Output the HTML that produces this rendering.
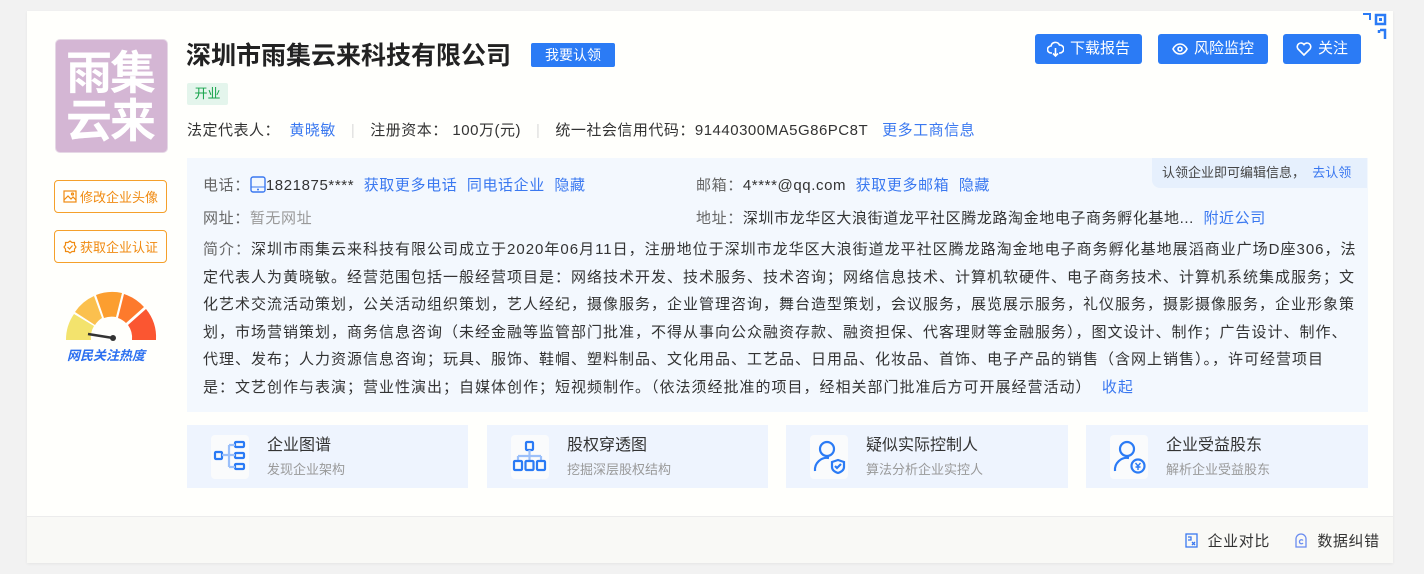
<!DOCTYPE html>
<html><head><meta charset="utf-8"><style>
*{margin:0;padding:0;box-sizing:border-box}
body{width:1424px;height:574px;background:#f2f2f2;font-family:"Liberation Sans","Noto Sans CJK SC",sans-serif;color:#333;position:relative;overflow:hidden}
.card{position:absolute;left:27px;top:11px;width:1366px;height:552px;background:#fffffc;box-shadow:0 1px 3px rgba(0,0,0,.06)}
.a{position:absolute;white-space:nowrap}
.blue{color:#3a78f0}
.btn{position:absolute;background:#2b7bf5;color:#fff;border-radius:3px;font-size:15px;height:30px;line-height:30px;display:flex;align-items:center;justify-content:center;gap:6px}
.obtn{position:absolute;left:54px;width:113px;height:33px;border:1px solid #f5a02a;border-radius:4px;color:#f08a10;font-size:13px;display:flex;align-items:center;justify-content:center;gap:3px}
.info{position:absolute;left:187px;top:158px;width:1181px;height:254px;background:#f3f8fe}
.t{font-size:15px;color:#333;letter-spacing:0.6px}
.g{color:#666}
.feat{position:absolute;top:425px;height:63px;background:#eef4fe}
.feat .ic{position:absolute;left:24px;top:10px;width:38px;height:44px;background:#fafbfc;border-radius:4px}
.feat .h{position:absolute;left:80px;top:6px;font-size:16px;color:#333}
.feat .s{position:absolute;left:80px;top:34px;font-size:13px;color:#999}
.iv{line-height:27.6px;font-size:15px;color:#333;letter-spacing:1px}
</style></head><body>
<div class="card"></div>
<!-- logo -->
<div class="a" style="left:55px;top:39px;width:113px;height:114px;background:#d4b6d4;border-radius:5px;border:1px solid #e6d8e6"></div>
<div class="a" style="left:66px;top:49px;font-size:46px;line-height:48px;font-weight:bold;color:#fff;letter-spacing:-2px;white-space:normal;width:100px">雨集<br>云来</div>
<div class="a" style="left:186px;top:36px;font-size:25px;font-weight:bold;color:#222">深圳市雨集云来科技有限公司</div>
<div class="a" style="left:531px;top:43px;width:84px;height:24px;background:#2b7bf5;color:#fff;font-size:14px;line-height:24px;text-align:center;border-radius:2px">我要认领</div>
<div class="a" style="left:187px;top:83px;width:41px;height:22px;background:#e4f5ec;color:#16a34a;font-size:13px;line-height:22px;text-align:center;border-radius:2px">开业</div>
<div class="a" style="left:187px;top:121px;font-size:15px;line-height:20px;color:#333;letter-spacing:0.5px">法定代表人：&nbsp;&nbsp;<span class="blue">黄晓敏</span><span style="color:#ddd;margin:0 15px">|</span>注册资本：&nbsp;100万(元)<span style="color:#ddd;margin:0 15px">|</span>统一社会信用代码：91440300MA5G86PC8T&nbsp;&nbsp;&nbsp;<span class="blue">更多工商信息</span></div>
<!-- top buttons -->
<div class="btn" style="left:1035px;top:34px;width:107px"><svg width="17" height="16" viewBox="0 0 17 16" fill="none" stroke="#fff" stroke-width="1.6"><path d="M5 12H4a3.5 3.5 0 0 1 0-7 4.5 4.5 0 0 1 8.5-1A3.5 3.5 0 0 1 13 12h-1"/><path d="M8.5 7v8M6 12.5l2.5 2.5 2.5-2.5"/></svg>下载报告</div>
<div class="btn" style="left:1158px;top:34px;width:110px"><svg width="16" height="12" viewBox="0 0 16 12" fill="none" stroke="#fff" stroke-width="1.6"><path d="M1 6C3 2 5.5 1 8 1s5 1 7 5c-2 4-4.5 5-7 5S3 10 1 6z"/><circle cx="8" cy="6" r="2"/></svg>风险监控</div>
<div class="btn" style="left:1283px;top:34px;width:78px"><svg width="16" height="14" viewBox="0 0 16 14" fill="none" stroke="#fff" stroke-width="1.6"><path d="M8 13L2 7A3.5 3.5 0 0 1 8 2.5 3.5 3.5 0 0 1 14 7z"/></svg>关注</div>
<!-- qr corner -->
<svg class="a" style="left:1362px;top:13px" width="26" height="27" viewBox="0 0 26 27"><path d="M1 1h7v6" fill="none" stroke="#2b7bf5" stroke-width="2"/><rect x="14" y="2" width="9" height="9" fill="none" stroke="#2b7bf5" stroke-width="2.5"/><rect x="17" y="5" width="3" height="3" fill="#2b7bf5"/><path d="M18 17h5v9M17 17v3" fill="none" stroke="#2b7bf5" stroke-width="2.5"/></svg>
<!-- left buttons -->
<div class="obtn" style="top:180px"><svg width="14" height="13" viewBox="0 0 14 13" fill="none" stroke="#f08a10" stroke-width="1.2"><rect x="1" y="1" width="12" height="11"/><path d="M1 10l4-4 3 3 2-2 3 3"/><circle cx="9.5" cy="4" r="1"/></svg>修改企业头像</div>
<div class="obtn" style="top:230px"><svg width="14" height="14" viewBox="0 0 14 14" fill="none" stroke="#f08a10" stroke-width="1.2"><path d="M7 1l2 1.5h2.5V5L13 7l-1.5 2v2.5H9L7 13l-2-1.5H2.5V9L1 7l1.5-2V2.5H5z"/><path d="M4.5 7l2 2 3-3.5"/></svg>获取企业认证</div>
<!-- gauge -->
<svg class="a" style="left:64px;top:290px" width="95" height="52" viewBox="0 0 95 52">
<path d="M2 50A45 45 0 0 1 10 24L30 36A22 22 0 0 0 27 50z" fill="#f3e36d"/>
<path d="M11 22A45 45 0 0 1 30 6L38 28A22 22 0 0 0 31 35z" fill="#fbc04e"/>
<path d="M32 5A45 45 0 0 1 58 3L52 27A22 22 0 0 0 40 28z" fill="#fc9e2f"/>
<path d="M60 4A45 45 0 0 1 80 17L62 33A22 22 0 0 0 54 28z" fill="#fd7a2c"/>
<path d="M82 19A45 45 0 0 1 92 50H68A22 22 0 0 0 64 35z" fill="#fb5631"/>
<path d="M24 44L49 48" stroke="#333" stroke-width="2.5"/><circle cx="49" cy="48" r="3" fill="#333"/>
</svg>
<div class="a" style="left:67px;top:345px;font-size:13px;font-weight:bold;font-style:italic;color:#2b6ff0">网民关注热度</div>
<!-- info box -->
<div class="info"></div>
<div class="a" style="left:1152px;top:158px;width:215px;height:30px;background:#e6f0fd;border-radius:0 0 0 8px;font-size:13px;line-height:30px;padding-left:10px;color:#444">认领企业即可编辑信息，&nbsp;&nbsp;<span class="blue">去认领</span></div>
<div class="a t" style="left:203px;top:174px"><span class="g">电话：</span><svg width="16" height="17" viewBox="0 0 16 17" style="vertical-align:-3px"><rect x="1" y="1" width="14" height="15" rx="2" fill="none" stroke="#3a78f0" stroke-width="1.4"/><path d="M1 11h14" stroke="#3a78f0"/><circle cx="8" cy="13.5" r="1" fill="#3a78f0"/></svg>1821875****&nbsp;&nbsp;<span class="blue">获取更多电话</span>&nbsp;&nbsp;<span class="blue">同电话企业</span>&nbsp;&nbsp;<span class="blue">隐藏</span></div>
<div class="a t" style="left:203px;top:207px"><span class="g">网址：</span><span style="color:#999">暂无网址</span></div>
<div class="a t" style="left:696px;top:174px"><span class="g">邮箱：</span>4****@qq.com&nbsp;&nbsp;<span class="blue">获取更多邮箱</span>&nbsp;&nbsp;<span class="blue">隐藏</span></div>
<div class="a t" style="left:696px;top:207px"><span class="g">地址：</span>深圳市龙华区大浪街道龙平社区腾龙路淘金地电子商务孵化基地...&nbsp;&nbsp;<span class="blue">附近公司</span></div>
<div class="a iv" style="left:203px;top:236px"><span class="g">简介：</span>深圳市雨集云来科技有限公司成立于2020年06月11日，注册地位于深圳市龙华区大浪街道龙平社区腾龙路淘金地电子商务孵化基地展滔商业广场D座306，法<br>定代表人为黄晓敏。经营范围包括一般经营项目是：网络技术开发、技术服务、技术咨询；网络信息技术、计算机软硬件、电子商务技术、计算机系统集成服务；文<br>化艺术交流活动策划，公关活动组织策划，艺人经纪，摄像服务，企业管理咨询，舞台造型策划，会议服务，展览展示服务，礼仪服务，摄影摄像服务，企业形象策<br>划，市场营销策划，商务信息咨询（未经金融等监管部门批准，不得从事向公众融资存款、融资担保、代客理财等金融服务），图文设计、制作；广告设计、制作、<br>代理、发布；人力资源信息咨询；玩具、服饰、鞋帽、塑料制品、文化用品、工艺品、日用品、化妆品、首饰、电子产品的销售（含网上销售）。，许可经营项目<br>是：文艺创作与表演；营业性演出；自媒体创作；短视频制作。（依法须经批准的项目，经相关部门批准后方可开展经营活动）&nbsp;&nbsp;<span class="blue">收起</span></div>
<!-- features -->
<div class="feat" style="left:187px;width:281px"><div class="ic"><svg width="38" height="44" viewBox="0 0 38 44" fill="none" stroke="#2b7bf5" stroke-width="2.2"><rect x="4" y="17" width="7" height="7" rx="1"/><rect x="24" y="7" width="9" height="5" rx="1"/><rect x="24" y="18" width="9" height="5" rx="1"/><rect x="24" y="29" width="9" height="5" rx="1"/><path d="M11 20h13M18 10v22M18 10h6M18 32h6" stroke="#9cc0fa"/></svg></div><div class="h">企业图谱</div><div class="s">发现企业架构</div></div>
<div class="feat" style="left:487px;width:281px"><div class="ic"><svg width="38" height="44" viewBox="0 0 38 44" fill="none" stroke="#2b7bf5" stroke-width="2.2"><rect x="15" y="7" width="7" height="8" rx="1"/><path d="M18.5 15v6M7 21h23M7 21v5M30 21v5M18.5 21v5" stroke="#9cc0fa"/><rect x="3" y="26" width="8" height="9" rx="1"/><rect x="14.5" y="26" width="8" height="9" rx="1"/><rect x="26" y="26" width="8" height="9" rx="1"/></svg></div><div class="h">股权穿透图</div><div class="s">挖掘深层股权结构</div></div>
<div class="feat" style="left:786px;width:282px"><div class="ic"><svg width="38" height="44" viewBox="0 0 38 44" fill="none" stroke="#2b7bf5" stroke-width="2.2"><circle cx="17" cy="14" r="7"/><path d="M5 36a12 12 0 0 1 14-13"/><path d="M22 27l6-2 6 2v5c0 3-3 5-6 6-3-1-6-3-6-6z"/><path d="M25 31l2 2 4-4"/></svg></div><div class="h">疑似实际控制人</div><div class="s">算法分析企业实控人</div></div>
<div class="feat" style="left:1086px;width:282px"><div class="ic"><svg width="38" height="44" viewBox="0 0 38 44" fill="none" stroke="#2b7bf5" stroke-width="2.2"><circle cx="17" cy="14" r="7"/><path d="M5 36a12 12 0 0 1 14-13"/><circle cx="28" cy="31" r="6.5"/><path d="M25.5 28l2.5 3 2.5-3M28 31v4M25.5 32h5" stroke-width="1.4"/></svg></div><div class="h">企业受益股东</div><div class="s">解析企业受益股东</div></div>
<!-- footer -->
<div class="a" style="left:27px;top:516px;width:1366px;height:47px;background:#f9f9f6;border-top:1px solid #ececec"></div>
<div class="a" style="left:1185px;top:530px;font-size:15px;color:#333;letter-spacing:0.6px"><svg width="13" height="15" viewBox="0 0 13 15" style="vertical-align:-2px" fill="none" stroke="#3a78f0" stroke-width="1.3"><rect x="1" y="1" width="11" height="13"/><path d="M3 4h3v3H3M7 9l3 3M10 9l-3 3"/></svg>&nbsp; 企业对比&nbsp;&nbsp;&nbsp;&nbsp;&nbsp;<svg width="14" height="15" viewBox="0 0 14 15" style="vertical-align:-2px" fill="none" stroke="#6a8cf0" stroke-width="1.3"><path d="M2 14V6a5 5 0 0 1 10 0v8z"/><path d="M9 7.5a2 2 0 1 0 0 2.5"/></svg>&nbsp; 数据纠错</div>
</body></html>
